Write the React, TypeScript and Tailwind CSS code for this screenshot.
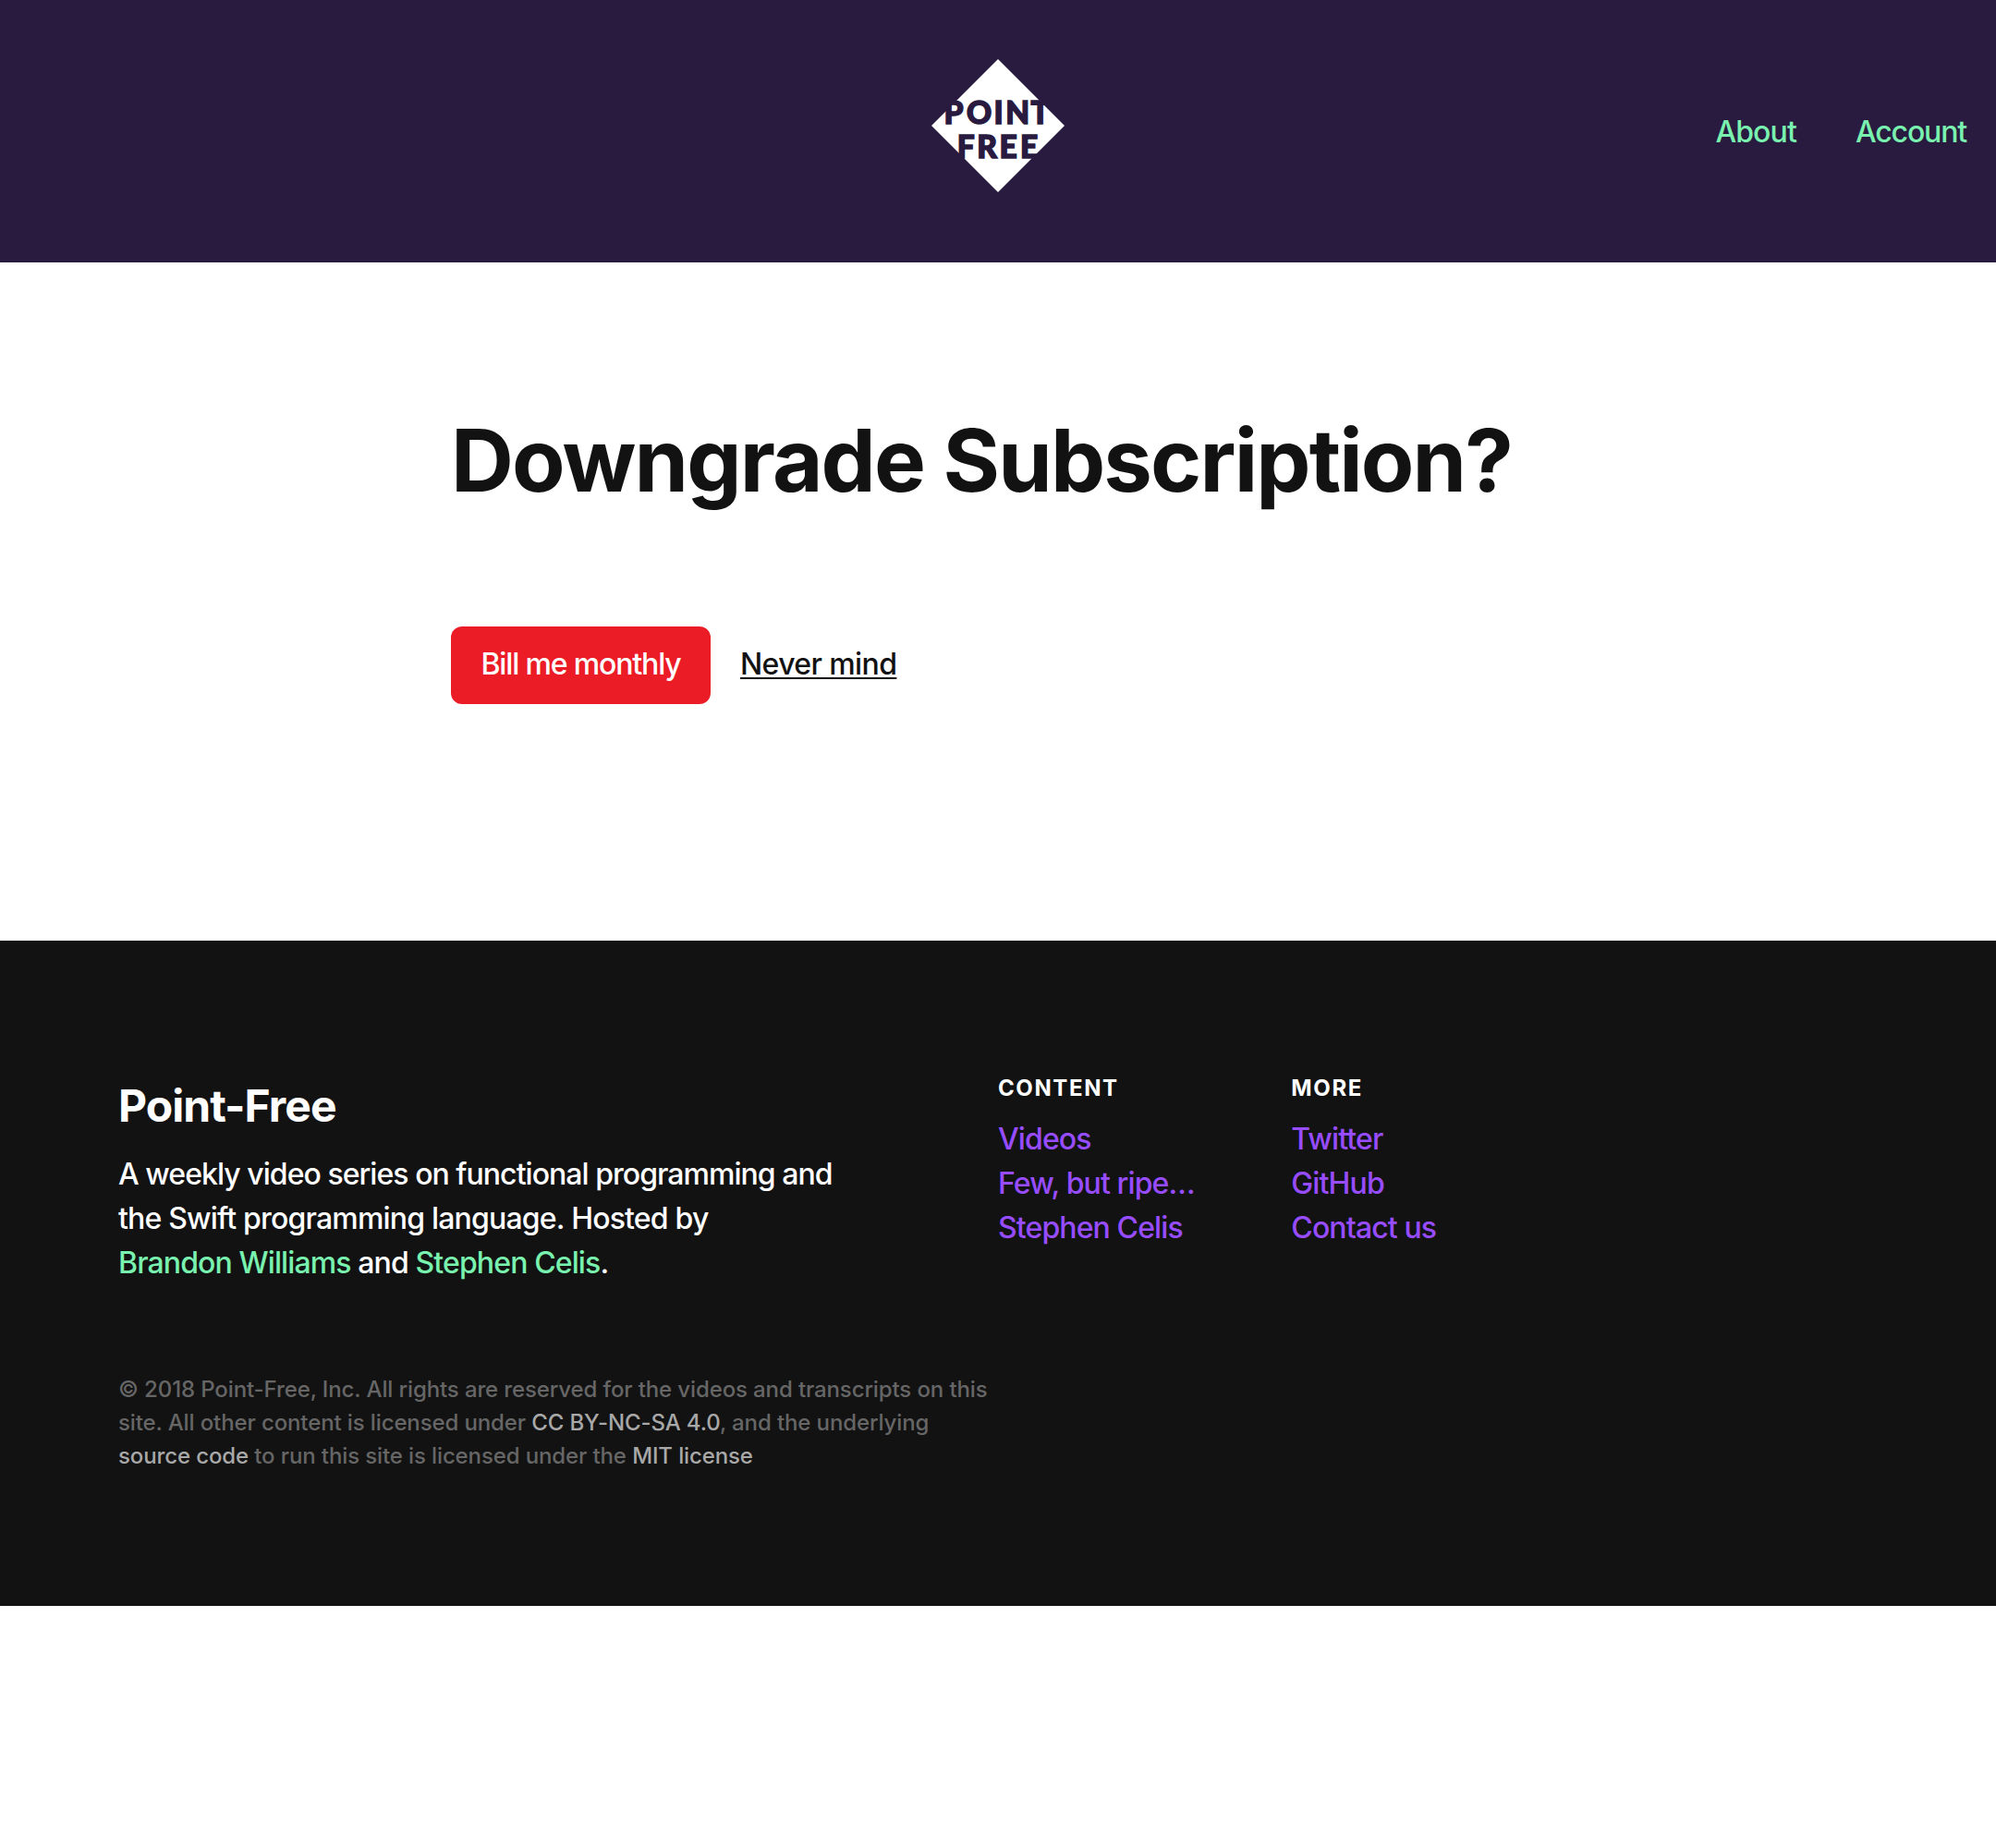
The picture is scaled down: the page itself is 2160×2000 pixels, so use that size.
import React from "react";

type Glyph = { char: string; x: number };

const pointGlyphs: Glyph[] = [
  { char: "P", x: 13.6 },
  { char: "O", x: 38 },
  { char: "I", x: 67.6 },
  { char: "N", x: 80.2 },
  { char: "T", x: 107.4 },
];

const freeGlyphs: Glyph[] = [
  { char: "F", x: 27.8 },
  { char: "R", x: 49.2 },
  { char: "E", x: 73.6 },
  { char: "E", x: 96 },
];

function Logo() {
  return (
    <svg
      width="144"
      height="144"
      viewBox="0 0 144 144"
      className="mb-3 overflow-visible"
      role="img"
      aria-label="Point-Free"
    >
      <path d="M72 0L144 72L72 144L0 72Z" fill="#ffffff" />
      <g className="fill-[#291a3f] stroke-[#291a3f] stroke-[1.5px] font-['Lato',sans-serif] text-[33.5px] font-black">
        <text x={pointGlyphs.map((g) => g.x).join(" ")} y="70.4">
          {pointGlyphs.map((g) => g.char).join("")}
        </text>
        <text x={freeGlyphs.map((g) => g.x).join(" ")} y="106.8">
          {freeGlyphs.map((g) => g.char).join("")}
        </text>
      </g>
    </svg>
  );
}

function LinkColumn({ title, links }: { title: string; links: string[] }) {
  return (
    <div>
      <h5 className="mb-[13px] text-2xl leading-9 font-bold tracking-[1.6px] text-white uppercase">{title}</h5>
      <ul className="tracking-[-0.88px]">
        {links.map((link) => (
          <li key={link}>
            <a href="#" className="whitespace-nowrap text-[#974dff]">
              {link}
            </a>
          </li>
        ))}
      </ul>
    </div>
  );
}

export default function App() {
  return (
    <div className="min-h-screen bg-white font-['Inter',sans-serif] text-[32px] leading-[48px] font-[450] tracking-[-0.88px] text-[#121212]">
      <header className="grid h-[284px] grid-cols-3 items-center bg-[#291a3f] px-8">
        <div />
        <a href="#" className="justify-self-center">
          <Logo />
        </a>
        <nav className="flex justify-end gap-16 pt-0.5 text-[#79f2b0]">
          <a href="#">About</a>
          <a href="#" className="tracking-[-1.15px]">Account</a>
        </nav>
      </header>

      <main className="mx-auto h-[734px] w-[1184px] pt-[154px]">
        <h1 className="text-[94px] leading-[120px] font-bold tracking-[-1.86px] whitespace-nowrap">
          Downgrade Subscription?
        </h1>
        <div className="mt-[120px] flex">
          <button className="h-[84px] w-[281px] rounded-xl bg-[#eb1c26] pb-0.5 tracking-[-1.15px] text-white">
            Bill me monthly
          </button>
          <a
            href="#"
            className="ml-8 self-start pt-[17px] font-medium tracking-[-0.6px] underline decoration-2 underline-offset-[3px]"
          >
            Never mind
          </a>
        </div>
      </main>

      <footer className="h-[720px] bg-[#121212] px-32 pt-[142px] text-white">
        <div className="grid grid-cols-6">
          <div className="col-span-3 pt-[7px] pr-32">
            <h4 className="mb-5 text-[48px] leading-[60px] font-bold tracking-[-0.95px]">Point-Free</h4>
            <p>
              <span className="tracking-[-0.96px]">A weekly video series on functional programming and</span>{" "}
              <span className="tracking-[-0.81px]">the Swift programming language. Hosted by</span>{" "}
              <a href="#" className="whitespace-nowrap text-[#79f2b0]">
                Brandon Williams
              </a>{" "}
              and{" "}
              <a href="#" className="whitespace-nowrap text-[#79f2b0]">
                Stephen Celis
              </a>
              .
            </p>
          </div>
          <LinkColumn title="Content" links={["Videos", "Few, but ripe…", "Stephen Celis"]} />
          <LinkColumn title="More" links={["Twitter", "GitHub", "Contact us"]} />
        </div>
        <p className="mt-[95px] w-[952px] text-2xl leading-9 tracking-[-0.12px] text-[#666666]">
          © 2018 Point-Free, Inc. All rights are reserved for the videos and transcripts on this site. All other
          content is licensed under{" "}
          <a href="#" className="text-[#a8a8a8]">
            CC BY-NC-SA 4.0
          </a>
          , and the underlying{" "}
          <a href="#" className="whitespace-nowrap text-[#a8a8a8]">
            source code
          </a>{" "}
          to run this site is licensed under the{" "}
          <a href="#" className="text-[#a8a8a8]">
            MIT license
          </a>
        </p>
      </footer>
    </div>
  );
}
